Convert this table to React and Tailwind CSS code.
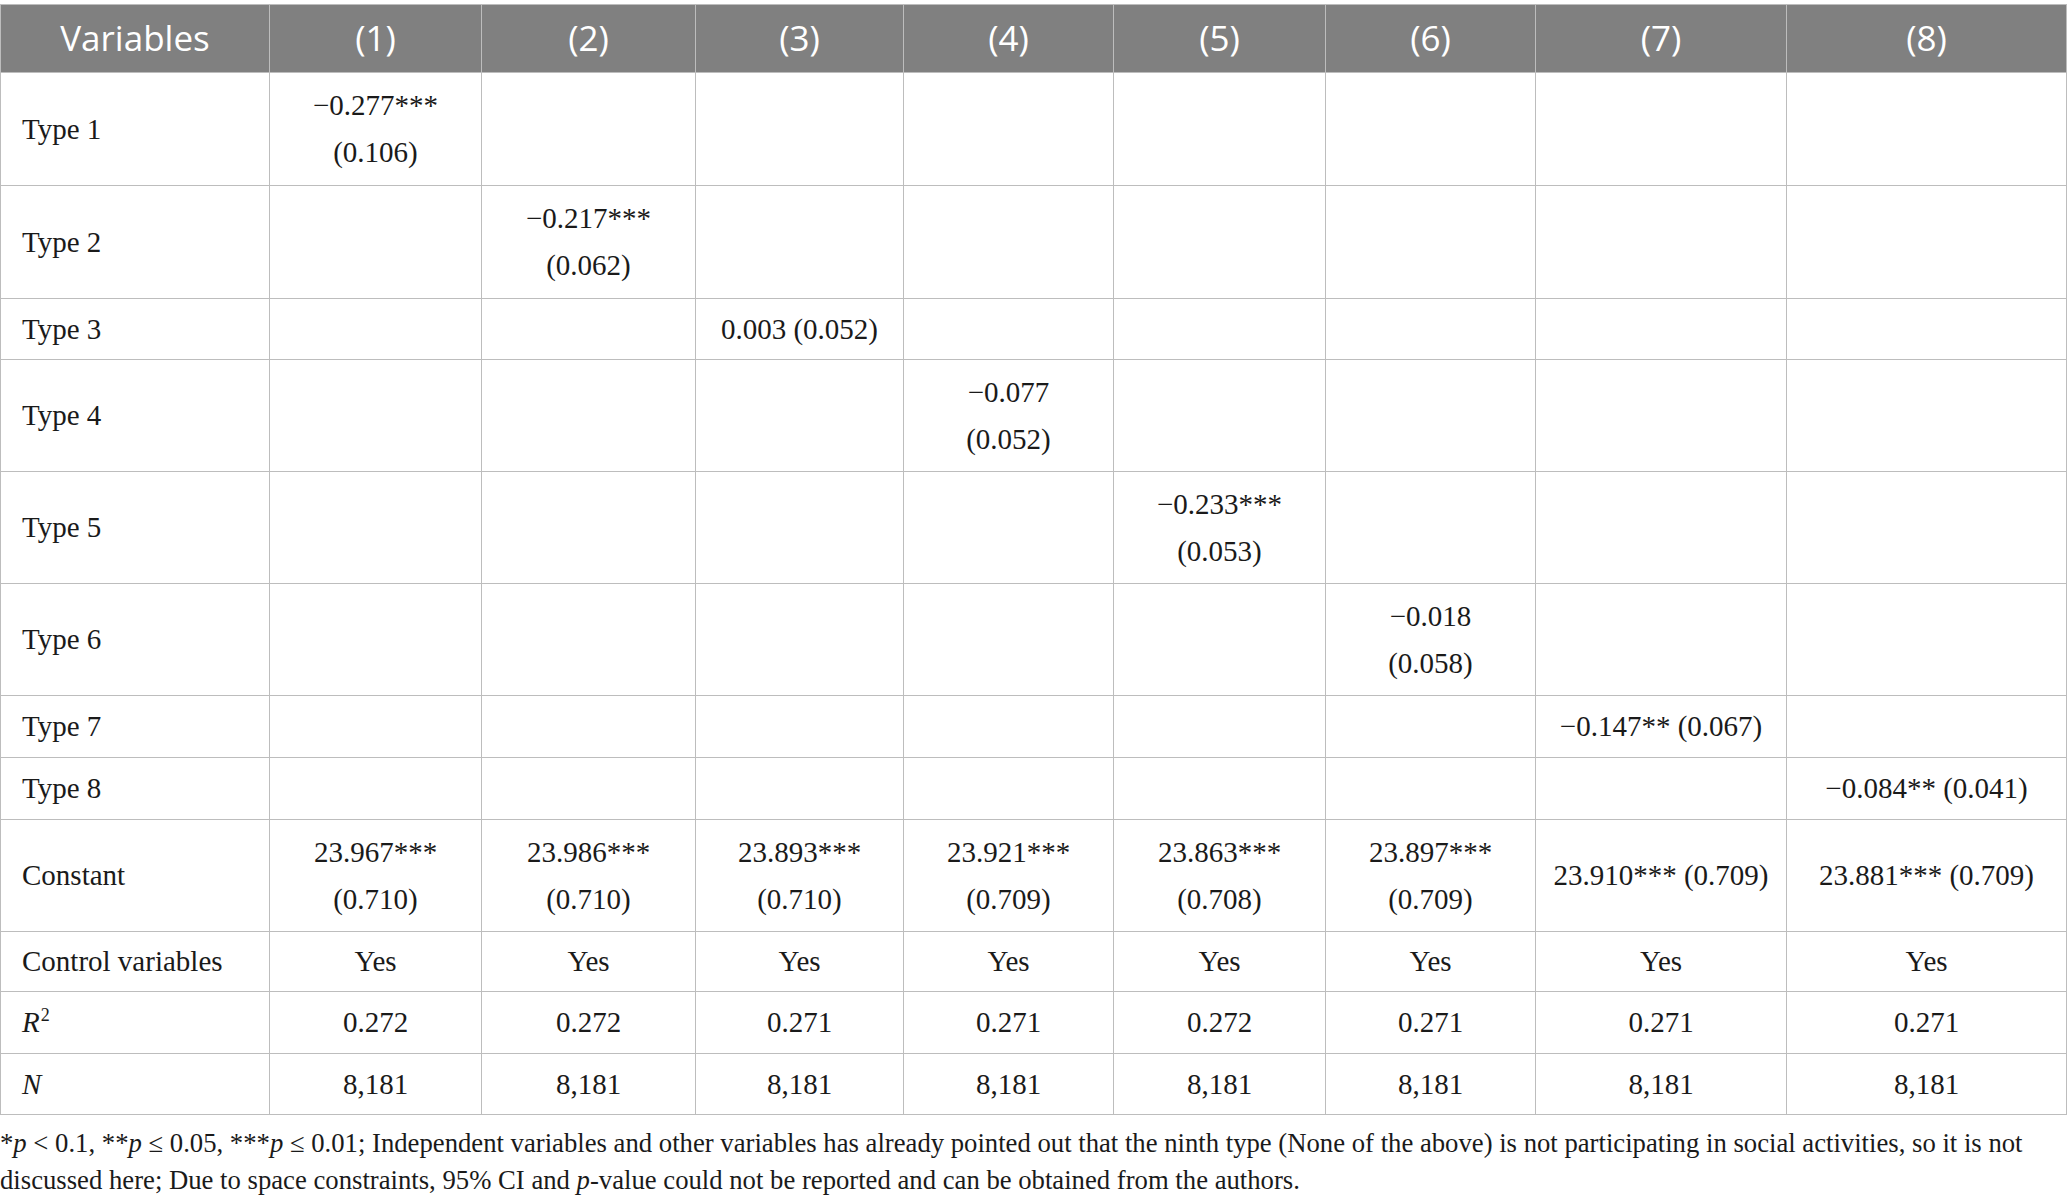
const cols = [269, 212, 214, 208, 210, 212, 210, 251, 280];

const rows = [
  { label: "Type 1", h: "h-[113px]", cells: { 0: ["−0.277***", "(0.106)"] } },
  { label: "Type 2", h: "h-[113px]", cells: { 1: ["−0.217***", "(0.062)"] } },
  { label: "Type 3", h: "h-[61px]", cells: { 2: ["0.003 (0.052)"] } },
  { label: "Type 4", h: "h-[112px]", cells: { 3: ["−0.077", "(0.052)"] } },
  { label: "Type 5", h: "h-[112px]", cells: { 4: ["−0.233***", "(0.053)"] } },
  { label: "Type 6", h: "h-[112px]", cells: { 5: ["−0.018", "(0.058)"] } },
  { label: "Type 7", h: "h-[62px]", cells: { 6: ["−0.147** (0.067)"] } },
  { label: "Type 8", h: "h-[62px]", cells: { 7: ["−0.084** (0.041)"] } },
  {
    label: "Constant",
    h: "h-[112px]",
    cells: {
      0: ["23.967***", "(0.710)"],
      1: ["23.986***", "(0.710)"],
      2: ["23.893***", "(0.710)"],
      3: ["23.921***", "(0.709)"],
      4: ["23.863***", "(0.708)"],
      5: ["23.897***", "(0.709)"],
      6: ["23.910*** (0.709)"],
      7: ["23.881*** (0.709)"],
    },
  },
  { label: "Control variables", h: "h-[60px]", all: "Yes" },
  { label: "r2", h: "h-[62px]", vals: ["0.272", "0.272", "0.271", "0.271", "0.272", "0.271", "0.271", "0.271"] },
  { label: "n", h: "h-[61px]", all: "8,181" },
];

function Label({ label }) {
  if (label === "r2") {
    return (
      <span>
        <i>R</i>
        <sup className="text-[18px] relative -top-[11px] ml-[1px]">2</sup>
      </span>
    );
  }
  if (label === "n") return <i>N</i>;
  return label;
}

function cellLines(row, i) {
  if (row.all) return [row.all];
  if (row.vals) return [row.vals[i]];
  return row.cells[i] || [];
}

export default function App() {
  return (
    <div className="w-[2067px] bg-white pt-[4px] font-['Liberation_Serif',serif] text-[#1a1a1a]">
      <table className="table-fixed border-collapse w-[2067px]">
        <colgroup>
          {cols.map((w, i) => (
            <col key={i} style={{ width: w }} />
          ))}
        </colgroup>
        <thead>
          <tr className="h-[68px] bg-[#808080] text-white font-['Open_Sans',sans-serif] text-[35px]">
            <th className="border border-[#bdbdbd] font-normal text-center">Variables</th>
            {[1, 2, 3, 4, 5, 6, 7, 8].map((n) => (
              <th key={n} className="border border-[#bdbdbd] font-normal text-center">
                ({n})
              </th>
            ))}
          </tr>
        </thead>
        <tbody className="text-[29px] leading-[47px]">
          {rows.map((row) => (
            <tr key={row.label} className={row.h}>
              <td className="border border-[#bdbdbd] pl-[21px] align-middle">
                <Label label={row.label} />
              </td>
              {cols.slice(1).map((_, i) => (
                <td key={i} className="border border-[#bdbdbd] text-center align-middle">
                  {cellLines(row, i).map((line, j) => (
                    <div key={j}>{line}</div>
                  ))}
                </td>
              ))}
            </tr>
          ))}
        </tbody>
      </table>
      <p className="text-[26.7px] leading-[37px] pt-[10px]">
        *<i>p</i> &lt; 0.1, **<i>p</i> ≤ 0.05, ***<i>p</i> ≤ 0.01; Independent variables and other variables has already pointed out that the ninth type (None of the above) is not participating in social activities, so it is not discussed here; Due to space constraints, 95% CI and <i>p</i>-value could not be reported and can be obtained from the authors.
      </p>
    </div>
  );
}
